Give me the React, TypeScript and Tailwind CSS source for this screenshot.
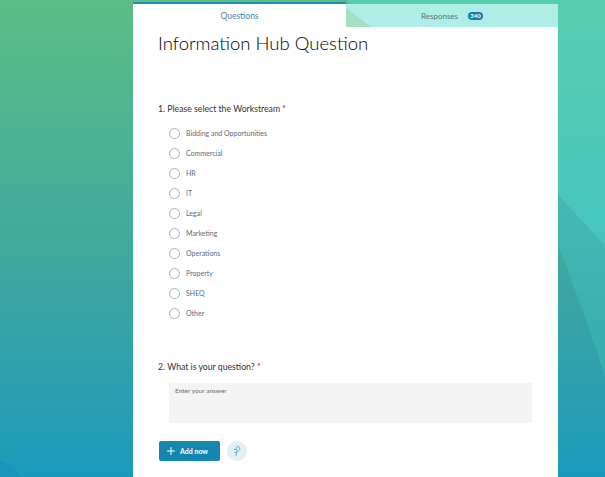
import React from "react";

const options = ["Bidding and Opportunities", "Commercial", "HR", "IT", "Legal", "Marketing", "Operations", "Property", "SHEQ", "Other"];

export default function App() {
  return (
    <div className="relative h-[477px] w-[605px] overflow-hidden bg-gradient-to-b from-[#5cbe84] via-[#42a99c] to-[#1b9aba] font-['Lato','Open_Sans',sans-serif]">
      <svg className="absolute inset-0" width="605" height="477" viewBox="0 0 605 477">
        <defs>
          <linearGradient id="r" x1="0" y1="0" x2="0" y2="1">
            <stop offset="0" stopColor="#58ceb0" />
            <stop offset="1" stopColor="#45c5bf" />
          </linearGradient>
          <linearGradient id="m" x1="0" y1="0" x2="0" y2="1">
            <stop offset="0" stopColor="#46b9b0" />
            <stop offset="1" stopColor="#35adb0" />
          </linearGradient>
        </defs>
        <polygon points="346,0 605,0 605,246 558,195" fill="url(#r)" />
        <path d="M558 195 605 246V376Q580 300 558 245Z" fill="url(#m)" />
        <polygon points="0,460 10,465 22,477 0,477" fill="#1a8fc0" opacity="0.7" />
      </svg>
      <main className="relative ml-[133px] mt-[2px] w-[425px]">
        <div className="flex h-[25px] text-[8px]">
          <div className="flex w-[213px] items-center justify-center border-t-2 border-[#1a8fb5] bg-white pt-[1px] text-[8.500px] text-[#3f86a8]">Questions</div>
          <div className="relative mt-[2px] flex flex-1 items-center justify-center gap-[10px] overflow-hidden bg-[#aeeee6] text-[#5c7477]">
            <svg className="absolute left-0 top-0" width="25" height="23" viewBox="0 0 25 23">
              <polygon points="0,4 25,23 0,23" fill="#a6e0c2" />
            </svg>
            <span className="relative">Responses</span>
            <span className="relative flex h-[8px] w-[15px] items-center justify-center rounded-full bg-[#0f7fa8] text-[6px] font-bold leading-none text-white">340</span>
          </div>
        </div>
        <div className="h-[450px] bg-white pl-[25px] pr-[26px]">
          <h1 className="pt-[3px] text-[18.5px] font-light leading-[26px] text-[#000000]">Information Hub Question</h1>
          <div className="mt-[47px] text-[8.7px] leading-[12px] text-[#333333]">
            1. Please select the Workstream <span className="text-[#a4262c]">*</span>
          </div>
          <ul className="ml-[11px] mt-[8px] flex flex-col">
            {options.map((o) => (
              <li key={o} className="flex h-[20px] items-center gap-[6px] text-[7px] text-[#5a6a7a]">
                <span className="h-[11px] w-[11px] rounded-full border border-[#a8b0b4] bg-white" />
                <span>{o}</span>
              </li>
            ))}
          </ul>
          <div className="mt-[38px] text-[8.7px] leading-[12px] text-[#333333]">
            2. What is your question? <span className="text-[#a4262c]">*</span>
          </div>
          <div className="ml-[11px] mt-[10px] h-[40px] w-[363px] bg-[#f4f4f4] px-[6px] pt-[3px] text-[6.5px] leading-[10px] text-[#77696a]">Enter your answer</div>
          <div className="ml-[1px] mt-[18px] flex items-center gap-[7px]">
            <button className="flex h-[20px] w-[61px] items-center justify-start gap-[5px] rounded-[2px] bg-[#1586ad] pl-[8px] text-[7px] font-bold text-white">
              <svg width="8" height="8" viewBox="0 0 8 8"><path d="M4 0v8M0 4h8" stroke="white" strokeWidth="1" fill="none" /></svg>
              Add now
            </button>
            <span className="flex h-[20px] w-[20px] items-center justify-center rounded-full bg-[#e3eff1]">
              <svg width="10" height="12" viewBox="0 0 10 12" fill="none" stroke="#5fa9c9" strokeWidth="1">
                <path d="M6 1.500c1 0 1.800 1 1.800 2.200S7 6 6 6 4.300 5 4.300 3.700 5 1.500 6 1.500zM5 6 4 11M2 4.500h2M2.500 7.500h1.500" />
              </svg>
            </span>
          </div>
        </div>
      </main>
    </div>
  );
}
